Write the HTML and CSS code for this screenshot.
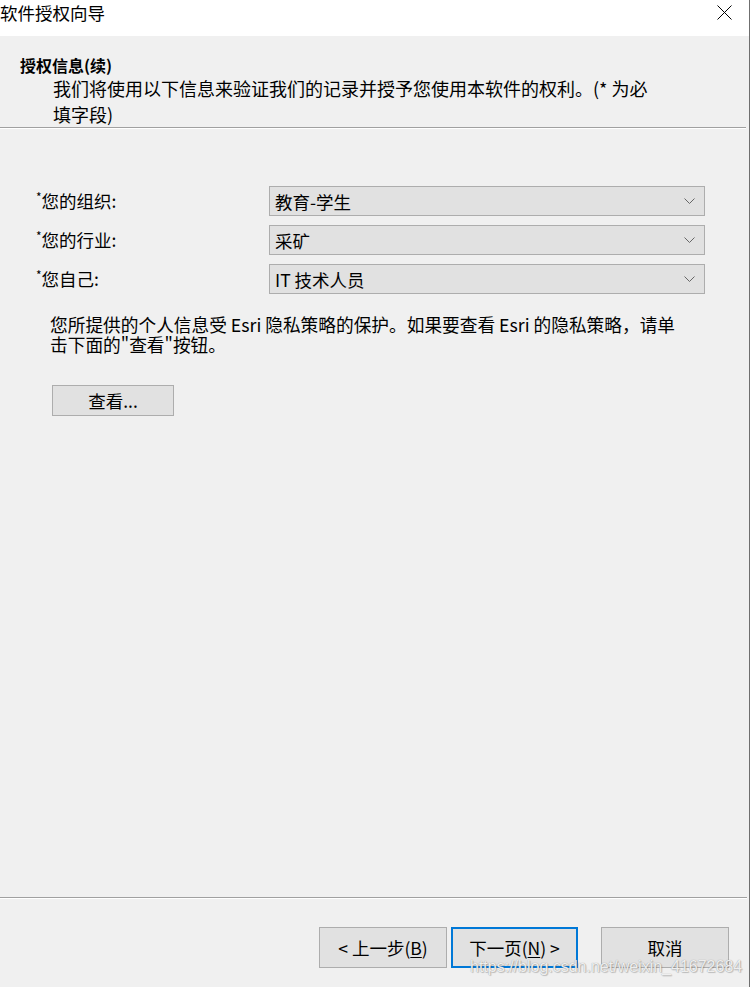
FILE: index.html
```html
<!DOCTYPE html>
<html lang="zh-CN">
<head>
    <meta charset="UTF-8">
    <title>软件授权向导</title>
    <link rel="stylesheet" href="styles.css">
</head>
<body>
    <div class="window">
        <div class="titlebar">
            <span class="title">软件授权向导</span>
            <svg class="close" width="15" height="15" viewBox="0 0 15 15">
                <path d="M0.5 0.5 L14.5 14.5 M14.5 0.5 L0.5 14.5" stroke="#000" stroke-width="1" fill="none"/>
            </svg>
        </div>

        <div class="header">
            <h1>授权信息(续)</h1>
            <p>我们将使用以下信息来验证我们的记录并授予您使用本软件的权利。(* 为必<br>填字段)</p>
        </div>
        <div class="divider"></div>

        <div class="content">
            <div class="form">
                <div class="form-row">
                    <label><span class="req">*</span>您的组织:</label>
                    <div class="select">
                        <span>教育-学生</span>
                        <svg class="chevron" width="11" height="6" viewBox="0 0 11 6"><polyline points="0.5,0.5 5.5,5.5 10.5,0.5" fill="none" stroke="#666" stroke-width="1"/></svg>
                    </div>
                </div>
                <div class="form-row">
                    <label><span class="req">*</span>您的行业:</label>
                    <div class="select">
                        <span>采矿</span>
                        <svg class="chevron" width="11" height="6" viewBox="0 0 11 6"><polyline points="0.5,0.5 5.5,5.5 10.5,0.5" fill="none" stroke="#666" stroke-width="1"/></svg>
                    </div>
                </div>
                <div class="form-row">
                    <label><span class="req">*</span>您自己:</label>
                    <div class="select">
                        <span>IT 技术人员</span>
                        <svg class="chevron" width="11" height="6" viewBox="0 0 11 6"><polyline points="0.5,0.5 5.5,5.5 10.5,0.5" fill="none" stroke="#666" stroke-width="1"/></svg>
                    </div>
                </div>
            </div>

            <p class="privacy"><span class="line">您所提供的个人信息受 Esri 隐私策略的保护。如果要查看 Esri 的隐私策略，请单</span><span class="line">击下面的"查看"按钮。</span></p>

            <button class="btn view-btn">查看...</button>
        </div>

        <div class="divider footer-divider"></div>
        <div class="footer">
            <button class="btn nav-btn">&lt; 上一步(<u>B</u>)</button>
            <button class="btn nav-btn default">下一页(<u>N</u>) &gt;</button>
            <button class="btn nav-btn cancel">取消</button>
        </div>

        <span class="watermark">https://blog.csdn.net/weixin_41672684</span>
    </div>
</body>
</html>
```

FILE: styles.css
```css
body {
    margin: 0;
    background: #fff;
    font-family: "Noto Sans CJK SC", "Noto Sans", sans-serif;
    color: #000;
}
.window {
    position: relative;
    width: 749px;
    height: 987px;
    background: #f0f0f0;
    border-right: 1px solid #6f6f6f;
    display: flex;
    flex-direction: column;
    overflow: hidden;
}
.titlebar {
    height: 36px;
    background: #fff;
    display: flex;
    justify-content: space-between;
    align-items: flex-start;
}
.title {
    font-size: 17.5px;
    line-height: 25px;
}
.close {
    margin: 5px 17px 0 0;
}
.header {
    height: 91px;
    box-sizing: border-box;
    padding-top: 19px;
}
.header h1 {
    margin: 0 0 0 20px;
    font-size: 16px;
    font-weight: bold;
    line-height: 20px;
}
.header p {
    margin: 0 0 0 53px;
    font-size: 18px;
    line-height: 26px;
}
.divider {
    height: 1px;
    background: #a0a0a0;
    border-bottom: 1px solid #fff;
    margin-right: 3px;
}
.content {
    flex: 1;
    padding-top: 57px;
}
.form {
    display: flex;
    flex-direction: column;
    gap: 9px;
}
.form-row {
    display: flex;
    align-items: center;
}
.form-row label {
    width: 233px;
    padding-left: 36px;
    font-size: 17.5px;
    line-height: 22px;
}
.req {
    font-size: 12px;
    vertical-align: top;
    line-height: 14px;
}
.select {
    width: 436px;
    height: 30px;
    box-sizing: border-box;
    background: #e1e1e1;
    border: 1px solid #adadad;
    display: flex;
    align-items: center;
    justify-content: space-between;
    padding: 0 9px 0 5px;
    font-size: 17.5px;
}
.chevron {
    display: block;
}
.privacy {
    margin: 20px 0 0 50px;
    font-size: 17.7px;
}
.privacy .line {
    display: block;
    height: 20px;
    line-height: 20px;
}
.btn {
    font-family: inherit;
    font-size: 17.5px;
    color: #000;
    background: #e1e1e1;
    border: 1px solid #adadad;
    padding: 0;
    box-sizing: border-box;
}
.view-btn {
    display: block;
    width: 122px;
    height: 31px;
    margin: 31px 0 0 52px;
    line-height: 28px;
}
.footer-divider {
    margin-right: 2px;
}
.footer {
    height: 88px;
    box-sizing: border-box;
    padding: 28px 20px 0 319px;
    display: flex;
    align-items: flex-start;
}
.nav-btn {
    width: 128px;
    height: 41px;
}
.nav-btn.default {
    width: 127px;
    margin-left: 4px;
    border: 2px solid #0078d7;
}
.nav-btn.cancel {
    margin-left: 23px;
}
.nav-btn u {
    text-underline-offset: 2px;
}
.watermark {
    position: absolute;
    left: 470px;
    top: 957px;
    font-family: "Liberation Sans", Arial, sans-serif;
    font-size: 16px;
    line-height: 20px;
    color: rgba(255, 255, 255, 0.85);
    text-shadow: 0 0 1px #8a8a8a, 1px 1px 1px rgba(0, 0, 0, 0.2);
}
```
